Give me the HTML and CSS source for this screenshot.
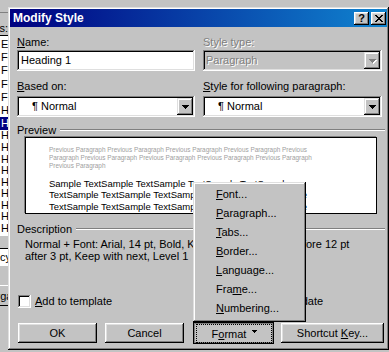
FILE: index.html
```
<!DOCTYPE html>
<html>
<head>
    <meta charset="utf-8" />
    <title>Modify Style</title>
    <link rel="stylesheet" href="styles.css">
</head>
<body>
    <div class="backdrop">
        <div class="bd-top"></div>
        <div class="bd-label">Styles:</div>
        <ul class="bd-list">
            <li>Endnote Reference</li>
            <li>Footer</li>
            <li>Footnote Reference</li>
            <li>Footnote Text</li>
            <li>Frame</li>
            <li>Header</li>
            <li class="sel">Heading 1</li>
            <li class="h">Heading 2</li>
            <li class="h">Heading 3</li>
            <li class="h">Heading 4</li>
            <li class="h">Heading 5</li>
            <li class="h">Heading 6</li>
            <li class="h">Heading 7</li>
            <li class="h">Heading 8</li>
            <li class="h">Heading 9</li>
            <li class="h">Hyperlink</li>
        </ul>
        <div class="bd-field">Frequency</div>
        <div class="bd-btn">Organizer...</div>
    </div>

    <div class="dialog">
        <div class="titlebar">
            <span class="title">Modify Style</span>
            <span class="tb-btn help">?</span>
            <span class="tb-btn">
                <svg width="8" height="7" viewBox="0 0 8 7" shape-rendering="crispEdges"><path d="M0 0h2v1h1v1h2v-1h1v-1h2v1h-1v1h-1v1h-1v1h1v1h1v1h1v1h-2v-1h-1v-1h-2v1h-1v1h-2v-1h1v-1h1v-1h1v-1h-1v-1h-1v-1h-1z" fill="#000"/></svg>
            </span>
        </div>

        <div class="content">
            <div class="fields">
                <div>
                    <label class="lbl"><u>N</u>ame:</label>
                    <div class="edit">Heading 1</div>
                </div>
                <div>
                    <label class="lbl disabled">Style type:</label>
                    <div class="combo off">
                        <span class="combo-text">Paragraph</span>
                        <span class="arrow"><svg width="7" height="4" viewBox="0 0 7 4" shape-rendering="crispEdges"><path d="M0 0h7v1h-1v1h-1v1h-1v1h-1v-1h-1v-1h-1v-1h-1z" fill="#808080"/></svg></span>
                    </div>
                </div>
                <div class="row2">
                    <label class="lbl"><u>B</u>ased on:</label>
                    <div class="combo">
                        <span class="combo-text para">¶ Normal</span>
                        <span class="arrow"><svg width="7" height="4" viewBox="0 0 7 4" shape-rendering="crispEdges"><path d="M0 0h7v1h-1v1h-1v1h-1v1h-1v-1h-1v-1h-1v-1h-1z" fill="#000"/></svg></span>
                    </div>
                </div>
                <div class="row2">
                    <label class="lbl"><u>S</u>tyle for following paragraph:</label>
                    <div class="combo">
                        <span class="combo-text para">¶ Normal</span>
                        <span class="arrow"><svg width="7" height="4" viewBox="0 0 7 4" shape-rendering="crispEdges"><path d="M0 0h7v1h-1v1h-1v1h-1v1h-1v-1h-1v-1h-1v-1h-1z" fill="#000"/></svg></span>
                    </div>
                </div>
            </div>

            <div class="group-head preview-head"><span>Preview</span><span class="rule"></span></div>
            <div class="preview">
                <div class="prev">Previous Paragraph Previous Paragraph Previous Paragraph Previous Paragraph Previous</div>
                <div class="prev">Paragraph Previous Paragraph Previous Paragraph Previous Paragraph Previous Paragraph</div>
                <div class="prev">Previous Paragraph</div>
                <div class="sample first">Sample TextSample TextSample TextSample TextSample</div>
                <div class="sample">TextSample TextSample TextSample TextSample TextSample</div>
                <div class="sample">TextSample TextSample TextSample TextSample TextSample</div>
                <div class="sample">TextSample TextSample TextSample TextSample TextSample</div>
            </div>

            <div class="group-head desc-head"><span>Description</span><span class="rule"></span></div>
            <div class="desc">
                <div>Normal + Font: Arial, 14 pt, Bold, Kern at 14 pt, Space before 12 pt</div>
                <div>after 3 pt, Keep with next, Level 1</div>
            </div>

            <div class="fields checks">
                <label class="check"><span class="box"></span><span><u>A</u>dd to template</span></label>
                <label class="check"><span class="box"></span><span>A<u>u</u>tomatically update</span></label>
            </div>

            <div class="buttons">
                <span class="btn"><span>OK</span></span>
                <span class="btn"><span>Cancel</span></span>
                <span class="btn pressed"><span>F<u>o</u>rmat</span><svg width="5" height="3" viewBox="0 0 5 3" shape-rendering="crispEdges"><path d="M0 0h5v1h-1v1h-1v1h-1v-1h-1v-1h-1z" fill="#000"/></svg></span>
                <span class="btn wide"><span>Shortcut <u>K</u>ey...</span></span>
            </div>
        </div>
    </div>

    <ul class="menu">
        <li><u>F</u>ont...</li>
        <li><u>P</u>aragraph...</li>
        <li><u>T</u>abs...</li>
        <li><u>B</u>order...</li>
        <li><u>L</u>anguage...</li>
        <li>Fra<u>m</u>e...</li>
        <li><u>N</u>umbering...</li>
    </ul>
</body>
</html>
```

FILE: styles.css
```
* {box-sizing: border-box;}
body {
    margin: 0;
    width: 389px;
    height: 352px;
    overflow: hidden;
    position: relative;
    background: #c3c3c3;
    color: #000;
    font: 11px/13px "Liberation Sans", Arial, sans-serif;
}
u {text-decoration: underline; text-underline-offset: 1px;}

/* window behind the dialog, only its right edge shows */
.backdrop {width: 9px;overflow: hidden;}
.bd-top {height: 13px;border-bottom: 1px solid #808080;}
.bd-label {display: flex;justify-content: flex-end;width: 8px;white-space: nowrap;margin-top: 9px;}
.bd-list {
    list-style: none;
    margin: 0;
    padding: 2px 0 0;
    height: 201px;
    background: #fff;
    border-top: 1px solid #000;
    white-space: nowrap;
}
.bd-list li {height: 13.2px;line-height: 13.2px;padding-left: 1px;}
.bd-list li.h {height: 11.6px;line-height: 11.6px;}
.bd-list li.sel {background: #000080;color: #fff;}
.bd-field {
    display: flex;
    justify-content: flex-end;
    width: 11px;
    height: 18px;
    margin-top: 12px;
    line-height: 17px;
    background: #fff;
    border-top: 1px solid #000;
    white-space: nowrap;
}
.bd-btn {
    margin: 19px 0 0 -14px;
    height: 21px;
    line-height: 20px;
    padding-left: 2px;
    border-top: 1px solid #fff;
    border-bottom: 1px solid #000;
    white-space: nowrap;
}

/* dialog frame */
.dialog {
    position: absolute;
    left: 8px;
    top: 7px;
    width: 381px;
    height: 343px;
    padding: 2px;
    background: #c3c3c3;
    box-shadow: inset -1px -1px #000, inset 1px 1px #dfdfdf, inset -2px -2px #808080, inset 2px 2px #fff;
}
.titlebar {
    display: flex;
    align-items: center;
    height: 18px;
    padding: 0 1px 0 3px;
    background: linear-gradient(90deg, #000080, #1084d0);
    color: #fff;
    font-weight: bold;
    font-size: 12px;
}
.title {flex: 1;}
.tb-btn {
    display: flex;
    align-items: center;
    justify-content: center;
    width: 15px;
    height: 13px;
    margin-left: 2px;
    background: #c3c3c3;
    color: #000;
    font-size: 11px;
    box-shadow: inset -1px -1px #000, inset 1px 1px #fff, inset -2px -2px #808080, inset 2px 2px #dfdfdf;
}

.content {padding: 9px 5px 0 7px;}
.fields {display: grid;grid-template-columns: 178px 179px;column-gap: 8px;}
.lbl {display: block;height: 13px;}
.row2 {margin-top: 9px;}
.row2 .lbl {margin-bottom: 3px;}
.fields > div:not(.row2) .lbl {margin-bottom: 1px;}
.disabled {color: #808080;text-shadow: 1px 1px #fff;}

.edit, .combo {
    height: 21px;
    background: #fff;
    box-shadow: inset -1px -1px #fff, inset 1px 1px #808080, inset -2px -2px #dfdfdf, inset 2px 2px #000;
}
.edit {padding: 0 4px;line-height: 21px;}
.combo {display: flex;padding: 2px;}
.combo-text {flex: 1;line-height: 17px;padding-left: 1px;}
.combo-text.para {padding-left: 13px;}
.combo.off {background: #c3c3c3;}
.combo.off .combo-text {color: #808080;text-shadow: 1px 1px #fff;}
.arrow {
    display: flex;
    align-items: center;
    justify-content: center;
    width: 16px;
    background: #c3c3c3;
    box-shadow: inset -1px -1px #000, inset 1px 1px #dfdfdf, inset -2px -2px #808080, inset 2px 2px #fff;
}
.combo.off .arrow svg {filter: drop-shadow(1px 1px 0 #fff);}

/* group headings with etched rule */
.group-head {display: flex;align-items: center;gap: 4px;height: 12px;line-height: 12px;margin-right: -3px;}
.rule {flex: 1;height: 2px;border-top: 1px solid #808080;border-bottom: 1px solid #fff;}
.preview-head {margin-top: 7px;margin-bottom: 1px;}
.desc-head {margin-top: 9px;}

.preview {
    margin-left: 8px;
    width: 352px;
    height: 77px;
    overflow: hidden;
    padding: 8px 0 0 23px;
    background: #fff;
    border: 1px solid #000;
    box-shadow: -1px -1px 0 #808080;
    white-space: nowrap;
}
.prev {font-size: 6.4px;line-height: 8px;color: #a0a0a0;}
.sample {font-size: 9.5px;line-height: 11.4px;}
.sample.first {margin-top: 8px;}

.desc {padding: 3px 0 0 8px;line-height: 12px;white-space: nowrap;}

.checks {margin-top: 33px;}
.check {display: flex;align-items: center;gap: 4px;height: 13px;white-space: nowrap;}
.check .box {
    width: 13px;
    height: 13px;
    margin-left: 1px;
    background: #fff;
    box-shadow: inset -1px -1px #fff, inset 1px 1px #808080, inset -2px -2px #dfdfdf, inset 2px 2px #000;
}

.buttons {display: flex;gap: 8px;margin-top: 15px;padding-left: 1px;}
.btn {
    flex: none;
    display: flex;
    align-items: center;
    justify-content: center;
    width: 79px;
    height: 20px;
    white-space: nowrap;
    box-shadow: inset -1px -1px #000, inset 1px 1px #fff, inset -2px -2px #808080, inset 2px 2px #dfdfdf;
}
.btn.wide {width: 103px;}
.btn.pressed {
    position: relative;
    margin-left: 2px;
    gap: 6px;
    padding: 2px 0 0 2px;
    outline: 1px solid #000;
    box-shadow: inset 1px 1px #808080, inset -1px -1px #808080;
}
.btn.pressed svg {margin-bottom: 5px;}
.btn.pressed::after {
    content: '';
    position: absolute;
    inset: 1px 1px 0 2px;
    border: 1px dotted #000;
}

/* popup menu over the dialog */
.menu {
    position: absolute;
    left: 193px;
    top: 182px;
    width: 113px;
    height: 140px;
    margin: 0;
    padding: 3px 0 0 23px;
    list-style: none;
    background: #c3c3c3;
    box-shadow: inset -1px -1px #000, inset 1px 1px #dfdfdf, inset -2px -2px #808080, inset 2px 2px #fff;
}
.menu li {height: 19px;line-height: 19px;}
```
